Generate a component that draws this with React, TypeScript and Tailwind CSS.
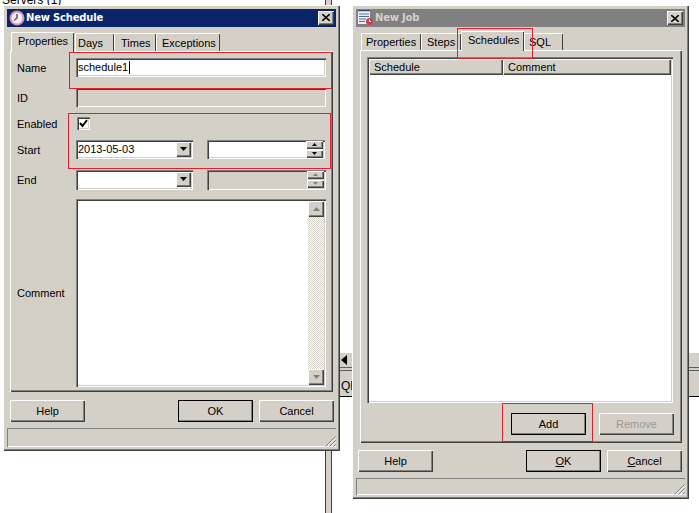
import type { ReactNode } from 'react';

const raised = 'bg-[#d4d0c8] shadow-[inset_1px_1px_0_#ffffff,inset_-1px_-1px_0_#404040,inset_-2px_-2px_0_#808080]';
const sunken = 'shadow-[inset_1px_1px_0_#808080,inset_2px_2px_0_#404040,inset_-1px_-1px_0_#ffffff,inset_-2px_-2px_0_#d4d0c8]';

function Triangle({ down = true, color = '#000000', small }: { down?: boolean; color?: string; small?: boolean }) {
  const w = small ? 5 : 7;
  const h = small ? 3 : 4;
  return (
    <svg width={w} height={h} viewBox="0 0 7 4" preserveAspectRatio="none">
      <path d={down ? 'M0 0h7L3.5 4z' : 'M0 4h7L3.5 0z'} fill={color} />
    </svg>
  );
}

function ClockIcon() {
  return (
    <svg width="16" height="16" viewBox="0 0 16 16" className="shrink-0">
      <circle cx="8" cy="8" r="7.5" fill="#d890b0" />
      <circle cx="8" cy="8" r="5.5" fill="#f4f0f4" />
      <path d="M8 4v4l-3 2.5" stroke="#5a5070" strokeWidth="1.5" fill="none" />
    </svg>
  );
}

function JobIcon() {
  return (
    <svg width="16" height="16" viewBox="0 0 16 16" className="shrink-0">
      <rect x="0" y="0" width="12" height="14" fill="#f0f0f4" />
      <path d="M0 .5h12" stroke="#304878" strokeWidth="1.5" />
      <path d="M1 4h10M1 6.500h10M1 9h7M1 11.500h6" stroke="#4a6aa0" />
      <circle cx="11.500" cy="11.500" r="3.500" fill="#c84050" />
      <path d="M11.500 9.500v2h1.500" stroke="#ffffff" fill="none" />
    </svg>
  );
}

function CloseButton() {
  return (
    <div className={`${raised} flex h-[14px] w-[16px] items-center justify-center`}>
      <svg width="8" height="7" viewBox="0 0 8 7">
        <path d="M0 0l8 7M8 0L0 7" stroke="#000000" strokeWidth="1.6" />
      </svg>
    </div>
  );
}

function Grip() {
  return (
    <svg width="11" height="11" viewBox="0 0 11 11" className="absolute bottom-0 right-0">
      <path d="M10.500 .5l-10 10M10.500 4.500l-6 6M10.500 8.500l-2 2" stroke="#808080" fill="none" />
      <path d="M10.500 2l-8.500 8.500M10.500 6l-4.500 4.500" stroke="#ffffff" fill="none" />
    </svg>
  );
}

function Btn({ label, x, primary, disabled }: { label: ReactNode; x?: string; primary?: boolean; disabled?: boolean }) {
  return (
    <button
      className={`${raised} h-[22px] w-[75px] pt-px text-center ${x ?? ''} ${primary ? 'outline outline-1 -outline-offset-1 outline-black' : ''} ${
        disabled ? 'text-[#9a9a96]' : 'text-black'
      }`}
    >
      {label}
    </button>
  );
}

function Tab({ label, className, active }: { label: string; className: string; active?: boolean }) {
  return (
    <div
      className={`${className} relative flex items-center border-l border-t border-white shadow-[inset_-1px_0_0_#404040] ${
        active ? 'z-10 -mb-px h-[20px] bg-[#d4d0c8] pb-[2px]' : ''
      }`}
    >
      {label}
    </div>
  );
}

function Spin({ disabled }: { disabled?: boolean }) {
  const color = disabled ? '#808080' : '#000000';
  return (
    <div className="absolute right-[2px] top-[1px] flex h-[17px] w-[17px] flex-col gap-px">
      <div className={`${raised} flex flex-1 items-center justify-center`}>
        <Triangle down={false} color={color} small />
      </div>
      <div className={`${raised} flex flex-1 items-center justify-center`}>
        <Triangle color={color} small />
      </div>
    </div>
  );
}

function Row({ label, className, children }: { label?: string; className: string; children: ReactNode }) {
  return (
    <div className={`flex items-center ${className}`}>
      <div className="w-[59px] shrink-0 pt-[2px]">{label}</div>
      {children}
    </div>
  );
}

function Combo({ value, h = 'h-[19px]' }: { value?: string; h?: string }) {
  return (
    <div className={`${sunken} relative flex ${h} w-[117px] items-center bg-white pl-[2px]`}>
      {value}
      <div className={`${raised} absolute right-[2px] top-[2px] flex h-[15px] w-[15px] items-center justify-center`}>
        <Triangle />
      </div>
    </div>
  );
}

function ScheduleWindow() {
  return (
    <div className="absolute left-[3px] top-[5px] flex h-[446px] w-[337px] flex-col bg-[#d4d0c8] p-[4px] shadow-[inset_1px_1px_0_#ffffff,inset_-1px_-1px_0_#404040,inset_-2px_-2px_0_#808080]">
      <div className="flex h-[18px] items-center gap-[1px] bg-[#0a246a] pl-[2px] pr-[2px] font-['DejaVu_Sans'] text-[10px] font-bold tracking-[-0.2px] text-white">
        <ClockIcon />
        <span className="flex-1">New Schedule</span>
        <CloseButton />
      </div>
      <div className="ml-[4px] mt-[5px] flex">
        <Tab label="Properties" className="w-[63px] justify-center" active />
        <Tab label="Days" className="ml-px mt-px h-[18px] w-[39px] pl-[2px] pt-[2px]" />
        <Tab label="Times" className="mt-px h-[18px] w-[42px] pl-[6px] pt-[2px]" />
        <Tab label="Exceptions" className="mt-px h-[18px] w-[64px] pl-[5px] pt-[2px]" />
      </div>
      <div className="ml-[3px] flex h-[343px] w-[323px] flex-col border-l border-t border-white pl-[6px] pt-[6px] shadow-[inset_-1px_-1px_0_#404040,inset_-2px_-2px_0_#808080]">
        <Row label="Name" className="h-[19px]">
          <div className={`${sunken} flex h-full w-[250px] items-center bg-white pl-[2px]`}>
            schedule1<span className="ml-px h-[13px] w-px bg-black" />
          </div>
        </Row>
        <Row label="ID" className="mt-[11px] h-[19px]">
          <div className={`${sunken} h-full w-[250px]`} />
        </Row>
        <Row label="Enabled" className="mt-[9px] h-[15px]">
          <div className={`${sunken} ml-px flex h-[13px] w-[13px] items-center justify-center bg-white`}>
            <svg width="9" height="9" viewBox="0 0 9 9">
              <path d="M1 4l2.500 3L8 1" stroke="#000000" strokeWidth="2" fill="none" />
            </svg>
          </div>
        </Row>
        <Row label="Start" className="mt-[9px] h-[19px]">
          <Combo value="2013-05-03" />
          <div className={`${sunken} relative ml-[14px] h-full w-[118px] bg-white`}>
            <Spin />
          </div>
        </Row>
        <Row label="End" className="mt-[11px] h-[20px]">
          <Combo h="h-[20px]" />
          <div className={`${sunken} relative ml-[14px] h-full w-[119px]`}>
            <Spin disabled />
          </div>
        </Row>
        <Row label="Comment" className="mt-[9px] h-[188px]">
          <div className={`${sunken} flex h-full w-[250px] justify-end bg-white p-[2px]`}>
            <div className="flex w-[16px] flex-col justify-between bg-[repeating-conic-gradient(#d4d0c8_0_25%,#ffffff_0_50%)] bg-[length:2px_2px]">
              <div className={`${raised} flex h-[16px] items-center justify-center`}>
                <Triangle down={false} color="#808080" />
              </div>
              <div className={`${raised} flex h-[16px] items-center justify-center`}>
                <Triangle color="#808080" />
              </div>
            </div>
          </div>
        </Row>
      </div>
      <div className="ml-[3px] mt-[8px] flex w-[324px]">
        <Btn label="Help" />
        <Btn label="OK" primary x="ml-auto" />
        <Btn label="Cancel" x="ml-[6px]" />
      </div>
      <div className="relative mt-[6px] h-[19px] border-l border-t border-[#808080] shadow-[inset_0_-1px_0_#ffffff]">
        <Grip />
      </div>
    </div>
  );
}

function JobWindow() {
  return (
    <div className="absolute left-[352px] top-[5px] flex h-[494px] w-[337px] flex-col bg-[#d4d0c8] p-[4px] shadow-[inset_1px_1px_0_#ffffff,inset_-1px_-1px_0_#404040,inset_-2px_-2px_0_#808080]">
      <div className="flex h-[18px] items-center gap-[1px] bg-[#808080] pl-[2px] pr-[2px] font-['DejaVu_Sans'] text-[10px] font-bold tracking-[-0.2px] text-[#d4d0c8]">
        <JobIcon />
        <span className="flex-1">New Job</span>
        <CloseButton />
      </div>
      <div className="ml-[5px] mt-[4px] flex">
        <Tab label="Properties" className="mt-[2px] h-[17px] w-[60px] pl-[4px]" />
        <Tab label="Steps" className="mt-[2px] h-[17px] w-[40px] pl-[5px]" />
        <Tab label="Schedules" className="w-[63px] pl-[6px]" active />
        <Tab label="SQL" className="mt-[2px] h-[17px] w-[39px] pl-[4px]" />
      </div>
      <div className="ml-[4px] flex h-[393px] w-[322px] flex-col border-l border-t border-white pl-[6px] pr-[9px] pt-[6px] shadow-[inset_-1px_-1px_0_#404040,inset_-2px_-2px_0_#808080]">
        <div className={`${sunken} flex h-[346px] flex-col bg-white p-[2px]`}>
          <div className="flex h-[16px] shrink-0">
            <div className={`${raised} flex w-[134px] items-center pl-[5px]`}>Schedule</div>
            <div className={`${raised} flex flex-1 items-center pl-[5px]`}>Comment</div>
          </div>
        </div>
        <div className="-mr-px mt-[10px] flex justify-end gap-[13px]">
          <Btn label="Add" primary />
          <Btn label="Remove" disabled />
        </div>
      </div>
      <div className="mt-[7px] flex w-[326px] pl-[2px]">
        <Btn label="Help" />
        <Btn
          label={
            <>
              <span className="underline">O</span>K
            </>
          }
          primary
          x="ml-auto"
        />
        <Btn
          label={
            <>
              <span className="underline">C</span>ancel
            </>
          }
          x="ml-[6px]"
        />
      </div>
      <div className="relative mt-[6px] h-[17px] border-l border-t border-[#808080] shadow-[inset_0_-1px_0_#ffffff]">
        <Grip />
      </div>
    </div>
  );
}

export default function App() {
  return (
    <div className="relative h-[513px] w-[699px] overflow-hidden bg-white font-['Liberation_Sans'] text-[11px] leading-none text-black">
      {/* what shows behind the two windows */}
      <div className="absolute left-[2px] top-[-6px] text-[12px] leading-[12px]">Servers (1)</div>
      <div className="absolute left-[325px] top-0 h-[513px] w-[7px] border-x border-[#404040] bg-[#d4d0c8]" />
      <div className="absolute left-[340px] top-[353px] h-[44px] w-[359px] border-b border-black bg-[#d4d0c8]">
        <div className="ml-[1px] mt-[2px]">
          <svg width="6" height="10" viewBox="0 0 6 10">
            <path d="M6 0v10L0 5z" fill="#000000" />
          </svg>
        </div>
        <div className="mt-[2px] h-[4px] border-y border-[#606060]" />
        <div className="pl-[1px] pt-[9px] text-[12px]">QL</div>
      </div>

      <ScheduleWindow />
      <JobWindow />

      {/* red highlight marks */}
      <div className="absolute left-[69px] top-[52px] h-[37px] w-[263px] border border-[#e0202c]" />
      <div className="absolute left-[68px] top-[113px] h-[56px] w-[263px] border border-[#e0202c]" />
      <div className="absolute left-[457px] top-[28px] h-[31px] w-[76px] border border-[#e0202c]" />
      <div className="absolute left-[502px] top-[403px] h-[39px] w-[91px] border border-[#e0202c]" />
    </div>
  );
}
